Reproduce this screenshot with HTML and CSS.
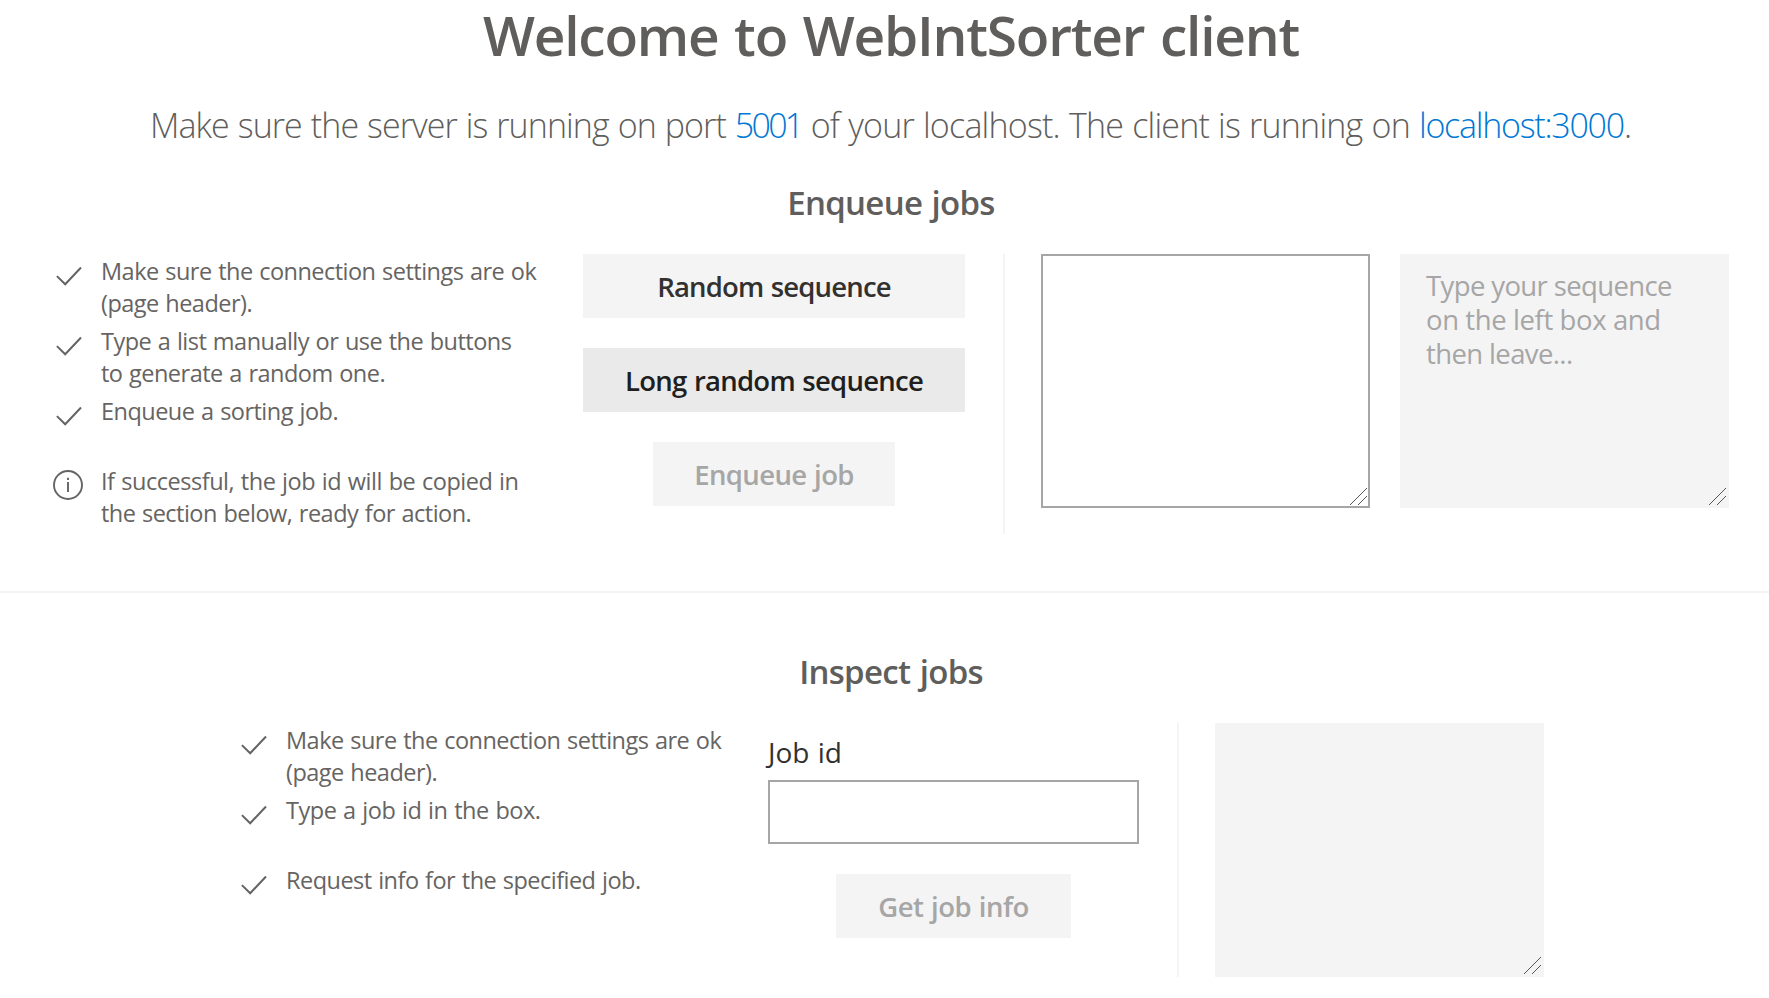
FILE: index.html
```html
<!DOCTYPE html>
<html lang="en">
<head>
<meta charset="utf-8">
<title>WebIntSorter client</title>
<link rel="stylesheet" href="styles.css">
</head>
<body>
<svg width="0" height="0" class="defs" aria-hidden="true">
  <symbol id="check" viewBox="0 0 26 20"><path d="M.9 10.1 9.2 18.2 25 1.5" fill="none" stroke="currentColor" stroke-width="2"/></symbol>
  <symbol id="info" viewBox="0 0 30 30"><circle cx="15" cy="15" r="14" fill="none" stroke="currentColor" stroke-width="1.9"/><path d="M15 12v10M15 7.8v2.2" fill="none" stroke="currentColor" stroke-width="1.9"/></symbol>
  <symbol id="grip" viewBox="0 0 17 17"><path d="M0 17 17 0M8 17 17 8" fill="none" stroke="#555" stroke-width="1"/></symbol>
</svg>
<header class="head">
  <h1 class="title">Welcome to WebIntSorter client</h1>
  <p class="lead">Make sure the server is running on port <a class="port">5001</a><span class="rest"> of your localhost. The client is running on </span><a class="host">localhost:3000</a>.</p>
</header>
<section class="section">
  <h2 class="heading">Enqueue jobs</h2>
  <div class="row enqueue">
    <ul class="steps">
      <li><svg class="check"><use href="#check"/></svg><span>Make sure the connection settings are ok<br>(page header).</span></li>
      <li><svg class="check"><use href="#check"/></svg><span>Type a list manually or use the buttons<br>to generate a random one.</span></li>
      <li><svg class="check"><use href="#check"/></svg><span>Enqueue a sorting job.</span></li>
      <li><svg class="info"><use href="#info"/></svg><span><span class="note">If successful, the job id will be copied in</span><br>the section below, ready for action.</span></li>
    </ul>
    <div class="actions">
      <button class="btn">Random sequence</button>
      <button class="btn hover">Long random sequence</button>
      <button class="btn disabled short">Enqueue job</button>
    </div>
    <div class="vline"></div>
    <div class="area outlined"><svg class="grip"><use href="#grip"/></svg></div>
    <div class="area filled second">Type your sequence<br><span class="l2">on the left box and</span><br>then leave...<svg class="grip"><use href="#grip"/></svg></div>
  </div>
</section>
<hr class="rule">
<section class="section">
  <h2 class="heading">Inspect jobs</h2>
  <div class="row inspect">
    <ul class="steps">
      <li><svg class="check"><use href="#check"/></svg><span>Make sure the connection settings are ok<br>(page header).</span></li>
      <li><svg class="check"><use href="#check"/></svg><span class="note">Type a job id in the box.</span></li>
      <li><svg class="check"><use href="#check"/></svg><span>Request info for the specified job.</span></li>
    </ul>
    <div class="form">
      <label class="label" for="job">Job id</label>
      <input class="field" id="job" type="text">
      <button class="btn disabled get">Get job info</button>
    </div>
    <div class="vline"></div>
    <div class="area filled"><svg class="grip"><use href="#grip"/></svg></div>
  </div>
</section>
</body>
</html>
```

FILE: styles.css
```css
* { box-sizing: border-box; }
body {
  margin: 0;
  height: 998px;
  overflow: hidden;
  background: #fff;
  color: #605e5c;
  font-family: "Open Sans", "Noto Sans", sans-serif;
}
.defs { position: absolute; }
h1, h2, p, ul { margin: 0; padding: 0; }
.head, .section { width: 1769px; }
.title {
  padding-left: 13px;
  font-size: 55px;
  font-weight: 600;
  line-height: 70px;
  letter-spacing: -1.2px;
  word-spacing: 2.5px;
  text-align: center;
  white-space: nowrap;
}
.lead {
  margin-top: 30px;
  padding-left: 150px;
  font-size: 34px;
  font-weight: 300;
  line-height: 50px;
  letter-spacing: -0.92px;
  word-spacing: 1px;
  white-space: nowrap;
}
.lead a { color: #0078d4; }
.port { letter-spacing: -2.7px; }
.rest { letter-spacing: -0.79px; }
.host { letter-spacing: -1.25px; }
.heading {
  padding-left: 13px;
  font-size: 33px;
  font-weight: 600;
  line-height: 46px;
  letter-spacing: -0.7px;
  word-spacing: 1.5px;
  text-align: center;
}
.head + .section { padding-top: 30px; height: 441px; }
.row { display: flex; margin-top: 28px; align-items: flex-start; }
.enqueue { padding-left: 53px; }
.inspect { padding-left: 238px; }
.steps {
  flex: none;
  width: 530px;
  padding-top: 1px;
  list-style: none;
  font-size: 23.5px;
  line-height: 32px;
  letter-spacing: -0.52px;
  word-spacing: 1px;
  color: #666462;
}
.steps li {
  display: flex;
  min-height: 64px;
  margin-bottom: 6px;
  white-space: nowrap;
}
.note { letter-spacing: -0.46px; }
.check { flex: none; width: 26px; height: 20px; margin: 11px 19px 0 3px; }
.info { flex: none; width: 30px; height: 30px; margin: 5px 18px 0 0; }
.actions {
  flex: none;
  display: flex;
  flex-direction: column;
  gap: 30px;
  width: 382px;
}
.btn {
  width: 100%;
  height: 64px;
  padding: 1px 0 0;
  border: 0;
  border-radius: 0;
  background: #f4f4f4;
  color: #323130;
  font: 600 27.5px/63px "Open Sans", "Noto Sans", sans-serif;
  letter-spacing: -0.82px;
  word-spacing: 1px;
}
.hover { background: #eaeaea; color: #201f1e; letter-spacing: -0.74px; }
.disabled { color: #a6a6a6; letter-spacing: -0.6px; }
.short { width: 242px; align-self: center; }
.vline { flex: none; width: 2px; height: 280px; margin: 0 36px 0 38px; background: #f4f4f4; }
.area {
  position: relative;
  flex: none;
  width: 329px;
  height: 254px;
  font-size: 27.5px;
  line-height: 34px;
  letter-spacing: -0.62px;
  color: #a6a6a6;
}
.outlined { border: 2px solid #a6a6a6; }
.filled { padding: 15px 26px; background: #f4f4f4; }
.second { margin-left: 30px; }
.l2 { letter-spacing: -0.4px; }
.grip { position: absolute; right: 3px; bottom: 3px; width: 17px; height: 17px; shape-rendering: crispEdges; }
.outlined .grip { right: 1px; bottom: 1px; }
.rule { height: 2px; margin: 0 0 55px; border: 0; background: #f4f4f4; }
.rule + .section .heading { padding-top: 1px; }
.rule + .section { margin-top: 0; }
.form {
  flex: none;
  display: flex;
  flex-direction: column;
  width: 371px;
}
.label {
  padding-top: 11px;
  font-size: 28px;
  line-height: 36px;
  margin-bottom: 10px;
  color: #323130;
  word-spacing: 1px;
}
.field { width: 371px; height: 64px; border: 2px solid #a6a6a6; border-radius: 0; background: #fff; }
.get { width: 235px; margin-top: 30px; align-self: center; letter-spacing: -0.5px; }
.inspect .vline { height: 254px; }
```
